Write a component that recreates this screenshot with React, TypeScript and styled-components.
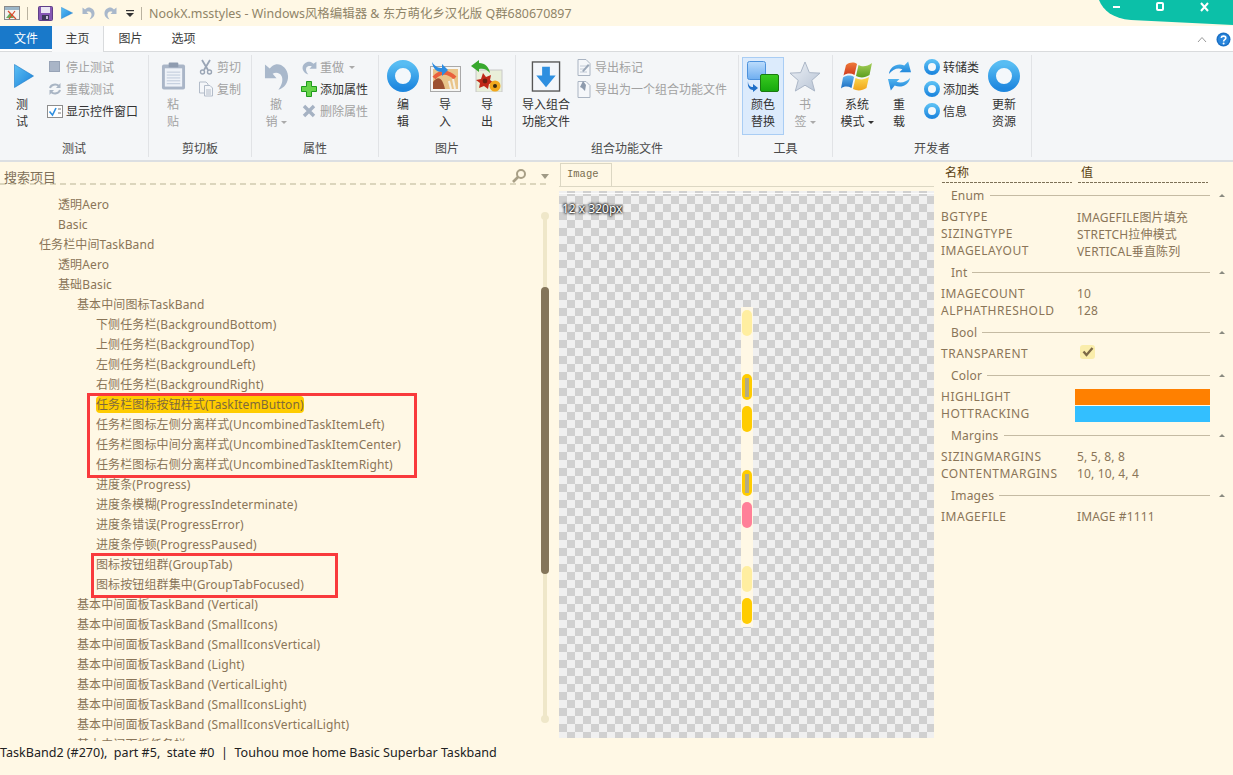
import React from 'react';
import styled, { createGlobalStyle } from 'styled-components';

const Global = createGlobalStyle`
  html, body { margin: 0; padding: 0; background: #fff8e5; overflow: hidden; }
  body { font-family: "Noto Sans", "Noto Sans CJK SC", sans-serif; font-size: 12px; }
`;
const Win = styled.div`
  position: relative; width: 1233px; height: 775px; display: flex; flex-direction: column;
  background: #fff8e5; overflow: hidden;
`;
const TitleBar = styled.div`
  height: 26px; display: flex; align-items: center; flex: none; padding-left: 4px;
`;
const QBtn = styled.span<{ $w: number }>`
  width: ${p => p.$w}px; flex: none; display: flex; align-items: center; height: 26px;
`;
const TitleSep = styled.span<{ $mr: number }>`
  width: 1px; height: 13px; background: #b9b2a0; flex: none; margin: 0 ${p => p.$mr}px 0 7px;
`;
const TitleText = styled.span`
  color: #8f8468; font-size: 12.45px; white-space: nowrap;
`;
const TabBar = styled.div`
  height: 26px; flex: none; background: #fff; display: flex; align-items: flex-start; position: relative;
  border-bottom: 1px solid #d9dbdd; box-sizing: border-box;
`;
const FileTab = styled.div`
  width: 52px; height: 23px; background: #1979ca; color: #fff; display: flex; align-items: center;
  justify-content: center; font-size: 12px;
`;
const Tab = styled.div<{ $active?: boolean }>`
  width: ${p => (p.$active ? 52 : 53)}px; height: ${p => (p.$active ? 26 : 23)}px; display: flex; align-items: center; justify-content: center;
  padding-bottom: ${p => (p.$active ? 3 : 0)}px; box-sizing: border-box; color: #3b3b3b;
  background: ${p => (p.$active ? '#f8f9fa' : '#fff')};
  border-right: ${p => (p.$active ? '1px solid #d9dbdd' : 'none')};
`;
const TabRight = styled.div`
  margin-left: auto; display: flex; align-items: center; gap: 9px; height: 26px; padding-right: 2px;
`;
const Ribbon = styled.div`
  height: 110px; flex: none; display: flex; background: #f4f6f8; border-bottom: 2px solid #dcdfe2; box-sizing: border-box;
`;
const Group = styled.div<{ $w: number }>`
  width: ${p => p.$w}px; flex: none; box-sizing: border-box; height: 102px; margin-top: 3px; padding-top: 2px;
  display: flex; flex-direction: column;
  border-right: 1px solid #e1e3e6;
`;
const GroupBody = styled.div<{ $pl: number }>`
  height: 78px; flex: none; padding-left: ${p => p.$pl}px; display: flex; align-items: flex-start;
`;
const GroupLabel = styled.div`
  height: 18px; margin-top: 4px; flex: none; display: flex; align-items: center; justify-content: center; color: #4a4a4a; font-size: 12px;
`;
const Large = styled.div<{ $w: number; $off?: boolean; $hot?: boolean; $ml?: number }>`
  width: ${p => p.$w}px; height: 78px; flex: none; display: flex; flex-direction: column; align-items: center;
  box-sizing: border-box; color: ${p => (p.$off ? '#a2a2a2' : '#333')}; margin-left: ${p => p.$ml ?? 0}px;
  border: 1px solid ${p => (p.$hot ? '#a9cdf4' : 'transparent')};
  background: ${p => (p.$hot ? '#dcebfc' : 'transparent')};
`;
const LargeIcon = styled.div<{ $shift?: number }>`
  height: 36px; display: flex; align-items: center; justify-content: center; flex: none;
  padding-left: ${p => p.$shift ?? 0}px;
`;
const LargeText = styled.div`
  line-height: 17px; text-align: center; white-space: pre; margin-top: 2px;
`;
const Caret = styled.span<{ $dark?: boolean }>`
  display: inline-block; width: 0; height: 0; margin-left: 3px; vertical-align: 2px;
  border-left: 3px solid transparent; border-right: 3px solid transparent;
  border-top: 3px solid ${p => (p.$dark ? '#333' : '#aaa')};
`;
const SmallCol = styled.div<{ $ml?: number }>`
  display: flex; flex-direction: column; margin-left: ${p => p.$ml ?? 0}px; margin-top: -1px;
`;
const Small = styled.div<{ $off?: boolean }>`
  height: 22px; display: flex; align-items: center; gap: 2px; white-space: nowrap;
  color: ${p => (p.$off ? '#a2a2a2' : '#333')};
`;
const SmIcon = styled.span`
  width: 18px; height: 18px; display: flex; align-items: center; justify-content: center; flex: none;
`;
const Main = styled.div`
  flex: 1; display: flex; min-height: 0;
`;
const TreePanel = styled.div`
  width: 559px; flex: none; position: relative; display: flex; flex-direction: column;
`;
const Search = styled.div`
  height: 23px; flex: none; margin-right: 9px; box-sizing: border-box;
  display: flex; align-items: flex-end; padding: 0 1px 0 4px; color: #7f7058; font-size: 13px;
  background: repeating-linear-gradient(90deg, #dcd6bd 0 6px, transparent 6px 10px) bottom / 100% 2px no-repeat;
`;
const SearchLabel = styled.span`
  flex: 1; line-height: 20px; margin-bottom: -2px;
`;
const SearchTail = styled.span<{ $w: number }>`
  width: ${p => p.$w}px; height: 16px; flex: none; display: flex; align-items: center; margin-bottom: 1px;
`;
const TreeList = styled.div`
  flex: 1; overflow: hidden; padding-top: 10px;
`;
const Row = styled.div<{ $lvl: number }>`
  height: 20px; line-height: 20px; padding-left: ${p => 39 + (p.$lvl - 1) * 19}px; color: #8a7558; white-space: nowrap; letter-spacing: 0.12px;
`;
const Hi = styled.span`
  background: #ffcc00; border-radius: 4px; display: inline-block; line-height: 17px; color: #7f6a3a;
`;
const RedBox = styled.div<{ $x: number; $y: number; $w: number; $h: number }>`
  position: absolute; left: ${p => p.$x}px; top: ${p => p.$y}px; width: ${p => p.$w}px; height: ${p => p.$h}px;
  border: 3px solid #f93a3c; box-sizing: border-box; pointer-events: none;
`;
const Track = styled.div`
  position: absolute; left: 543px; top: 53px; width: 4px; height: 505px; background: #efe7c9;
  &::before, &::after { content: ""; position: absolute; left: -2px; width: 8px; height: 8px; border-radius: 50%; background: #efe7c9; }
  &::before { top: -3px; }
  &::after { bottom: -3px; }
`;
const Thumb = styled.div`
  position: absolute; left: 541px; top: 125px; width: 8px; height: 287px; background: #84755a; border-radius: 4px;
`;
const ImagePanel = styled.div`
  width: 375px; flex: none; display: flex; flex-direction: column;
`;
const ImageTabs = styled.div`
  height: 25px; flex: none; display: flex; align-items: flex-start; padding-top: 1px; box-sizing: border-box;
  border-bottom: 1px solid #dcd7c3; margin-bottom: 4px;
`;
const ImageTab = styled.div`
  margin-left: 1px; width: 52px; height: 24px; box-sizing: border-box; border: 1px solid #dcd7c3;
  font-family: "Liberation Mono", monospace; font-size: 10.5px; color: #7a6e50;
  display: flex; align-items: center; padding: 0 0 3px 6px;
`;
const Checker = styled.div`
  height: 547px; position: relative; display: flex; justify-content: center; box-sizing: border-box;
  background: repeating-conic-gradient(#d0d0d0 0 25%, #f0f0f0 0 50%) 0 -3px / 16px 16px;
  &::before { content: ""; position: absolute; left: 0; right: 0; top: 2px; height: 1px; background: #fbfbfb; }
`;
const ImgInfo = styled.div`
  position: absolute; left: 3px; top: 9px; font-size: 12px; color: #fff;
  text-shadow: 0 0 3px #000, 0 0 3px #000, 0 0 2px #000;
`;
const Strip = styled.div`
  width: 12px; height: 320px; margin-top: 116px; background: #fff8e5; display: flex; flex-direction: column; align-items: center;
`;
const Frame = styled.div`
  height: 32px; flex: none; display: flex; align-items: center; justify-content: center; width: 100%;
`;
const Pill = styled.div<{ $c: string }>`
  width: 10px; height: 26px; border-radius: 5px; background: ${p => p.$c}; display: flex; align-items: center; justify-content: center;
`;
const PillCore = styled.div`
  width: 4px; height: 19px; background: #b4ab84;
`;
const Props = styled.div`
  flex: 1; min-width: 0; display: flex; flex-direction: column; padding-left: 8px;
`;
const PropHead = styled.div`
  height: 21px; flex: none; display: flex; gap: 6px; margin-right: 25px; margin-bottom: -1px;
`;
const HeadCell = styled.div<{ $w: number }>`
  width: ${p => p.$w}px; box-sizing: border-box; padding: 2px 0 0 3px; color: #5a3f10; font-size: 12px; line-height: 18px; height: 21px;
  background: repeating-linear-gradient(90deg, #7d7156 0 3px, transparent 3px 4px) bottom / 100% 1px no-repeat;
`;
const Heading = styled.div`
  height: 26px; box-sizing: border-box; padding: 1px 0 0 9px; display: flex; align-items: center; gap: 5px; color: #8a7558; letter-spacing: 0.2px;
`;
const HeadLine = styled.div`
  flex: 1; height: 1px; background: #c5bba3;
`;
const Tri = styled.span`
  width: 23px; flex: none; margin-left: -5px; display: flex; justify-content: center;
  &::before { content: ""; width: 0; height: 0; border-left: 3px solid transparent; border-right: 3px solid transparent; border-bottom: 3px solid #8a8a80; }
`;
const PropRow = styled.div`
  height: 17px; display: flex; align-items: center; color: #8a7558; white-space: nowrap; letter-spacing: 0.15px;
`;
const PropName = styled.div`
  width: 136px; flex: none; margin-left: -1px; letter-spacing: 0.5px;
`;
const Swatch = styled.div<{ $c: string }>`
  width: 135px; height: 16px; background: ${p => p.$c}; margin-left: -2px;
`;
const Check = styled.div`
  width: 15px; height: 14px; border-radius: 3px; background: #faedab; margin-left: 3px; margin-top: -4px;
  display: flex; align-items: center; justify-content: center;
`;
const Status = styled.div`
  height: 34px; flex: none; color: #222; font-size: 12.55px; padding-top: 1px; line-height: 21px; white-space: pre; box-sizing: border-box;
`;
const Controls = styled.svg`
  position: absolute; right: 0; top: 0;
`;

const Ring = ({ s }: { s: number }) => (
  <svg width={s} height={s} viewBox="0 0 32 32">
    <defs><linearGradient id="ring" x1="0" y1="0" x2="0" y2="1"><stop offset="0" stopColor="#58bdf3" /><stop offset="1" stopColor="#1f88df" /></linearGradient></defs>
    <circle cx="16" cy="16" r="12" fill="#f4f8fb" stroke="url(#ring)" strokeWidth="8" />
  </svg>
);
const PlayIcon = ({ w = 20, h = 24 }: { w?: number; h?: number }) => (
  <svg width={w} height={h} viewBox="0 0 20 24" preserveAspectRatio="none"><defs><linearGradient id="pl" x1="0" y1="0" x2="1" y2="1"><stop offset="0" stopColor="#5cc0f5" /><stop offset="1" stopColor="#1a80d8" /></linearGradient></defs><path d="M.5 .5 L19.5 12 L.5 23.5 Z" fill="url(#pl)" stroke="#1878c8" strokeWidth=".6" /></svg>
);
const Undo = ({ w = 25, h = 30, c = '#a9b8cb', flip = false }: { w?: number; h?: number; c?: string; flip?: boolean }) => (
  <svg width={w} height={h} viewBox="0 0 26 26" preserveAspectRatio="none" style={flip ? { transform: 'scaleX(-1)' } : undefined}>
    <path d="M1 3 V15 H13 L9 11 C12 9.5 17 10 18.5 13.5 C20 17 18.5 21 15 25 C21 23.5 25.5 18.5 25 13 C24.5 6.5 18 2 12 3 C10 3.5 8 4.5 6 6.5 Z" fill={c} />
  </svg>
);
const Ic = {
  app: <svg width="16" height="16" viewBox="0 0 16 16"><rect x=".5" y="1.5" width="15" height="13" fill="#f3f3f0" stroke="#8a8a8a" /><rect x="1" y="2" width="14" height="3" fill="#9cb6c8" /><path d="M2 13 L6 8 L10 13" fill="#6ca85c" /><path d="M4 6 L12 14 M11 6 L5 14" stroke="#d9482c" strokeWidth="1.2" /></svg>,
  save: <svg width="15" height="15" viewBox="0 0 15 15"><rect x=".5" y=".5" width="14" height="14" rx="1" fill="#8658b4" stroke="#5f3f88" /><rect x="3" y="1" width="9" height="6" fill="#ebe6f3" /><rect x="4" y="9" width="7" height="5" fill="#3e3a58" /><rect x="8" y="10" width="2" height="3" fill="#c9c2d8" /></svg>,
  stop: <svg width="12" height="12" viewBox="0 0 12 12"><rect x=".5" y=".5" width="10" height="10" fill="#a9b5c7" stroke="#97a3b6" /></svg>,
  refresh: <svg width="14" height="14" viewBox="0 0 14 14" fill="none" stroke="#a9b5c4" strokeWidth="2"><path d="M2 6 C3 2.5 8 1.5 11 4" /><path d="M12 8 C11 11.5 6 12.5 3 10" /><path d="M12.5 1 V6 H8" fill="#a9b5c4" stroke="none" /><path d="M1.5 13 V8 H6" fill="#a9b5c4" stroke="none" /></svg>,
  check: <svg width="16" height="13" viewBox="0 0 16 13"><rect x=".5" y=".5" width="15" height="12" fill="#fff" stroke="#8d8d8d" /><path d="M2.5 6.5 L5.5 10 L9 3" fill="none" stroke="#2f8fe0" strokeWidth="1.6" /><path d="M11 4 H14 M11 8 H14" stroke="#777" /></svg>,
  paste: <svg width="25" height="30" viewBox="0 0 26 30"><rect x="1" y="3" width="24" height="26" rx="2" fill="#a9b5c7" /><rect x="4" y="7" width="18" height="19" fill="#eef2f8" /><path d="M6 11 H20 M6 14 H20 M6 17 H20 M6 20 H20 M6 23 H20" stroke="#bcc8d8" /><rect x="8" y="1" width="10" height="5" rx="1" fill="#8f9cb0" /></svg>,
  cut: <svg width="14" height="16" viewBox="0 0 14 16" fill="none" stroke="#9aa5b5" strokeWidth="1.4"><path d="M3 1 L9 11 M11 1 L5 11" strokeWidth="1.8" /><circle cx="3.5" cy="13" r="2" /><circle cx="10.5" cy="13" r="2" /></svg>,
  copy: <svg width="16" height="16" viewBox="0 0 16 16" fill="#f4f6f9" stroke="#b3bcc9"><path d="M1.5 1 H8 L10 3 V12 H1.5 Z" /><path d="M6.5 4.5 H12 L14.5 7 V15 H6.5 Z" /><path d="M8 9 H13 M8 11 H13 M8 13 H13" /></svg>,
  plus: <svg width="16" height="16" viewBox="0 0 16 16"><path d="M5.5 .5 H10.5 V5.5 H15.5 V10.5 H10.5 V15.5 H5.5 V10.5 H.5 V5.5 H5.5 Z" fill="#66d34a" stroke="#1f9a1c" /></svg>,
  x: <svg width="14" height="14" viewBox="0 0 14 14"><path d="M2 2 L12 12 M12 2 L2 12" stroke="#a5b2c3" strokeWidth="3.4" /></svg>,
  importImg: <svg width="31" height="31" viewBox="0 0 31 31"><rect x=".5" y="5.5" width="30" height="25" fill="#f6f6f4" stroke="#a9a9a9" /><rect x="3" y="8" width="25" height="20" fill="#e9c489" /><path d="M3 21 C9 13 13 19 15 28 H3 Z" fill="#9c5030" /><path d="M4 17 C10 10 18 10 25 17" fill="none" stroke="#e9603c" strokeWidth="4" /><path d="M19 20 L21 28 M23 18 L25 28" stroke="#f4f0e4" strokeWidth="2" /><path d="M2 1 C5 6 9 7 12 7 V3 L18 9 L12 15 V11 C7 11 3 8 2 1 Z" fill="#2d8ce0" /></svg>,
  exportImg: <svg width="32" height="32" viewBox="0 0 32 32"><rect x="5" y="10" width="26" height="22" fill="#e9efd9" stroke="#c8c8c8" /><path d="M12 13 L15 17 L20 15 L19 20 L23 23 L18 24 L17 29 L13 26 L8 28 L9 23 L5 20 L10 19 Z" fill="#c02818" /><circle cx="24" cy="26" r="5.5" fill="#f2a81d" /><circle cx="24" cy="26" r="2" fill="#3a2a10" /><circle cx="14" cy="21" r="2.4" fill="#6c2010" /><path d="M0 6 L8 0 V3 C14 3 18 7 19 13 C16 9 12 8 8 9 V12 Z" fill="#38a82e" /></svg>,
  importFile: <svg width="30" height="31" viewBox="0 0 30 32"><rect x="1" y="1" width="28" height="30" fill="#f3f6fa" stroke="#555" strokeWidth="1.4" /><path d="M11 6 H19 V15 H25 L15 27 L5 15 H11 Z" fill="#2e8fe0" /></svg>,
  expMark: <svg width="14" height="17" viewBox="0 0 14 17"><path d="M1 .5 H9 L13 4.5 V16.5 H1 Z" fill="#f5f7fa" stroke="#aab4c2" /><path d="M3 7 H10 M3 10 H8 M3 13 H10" stroke="#c2cad5" /><path d="M5 12 L11 5 L12.5 6.5 L6.5 13 Z" fill="#9aa7b8" /></svg>,
  expGroup: <svg width="14" height="18" viewBox="0 0 14 18"><path d="M1 1.5 H9 L13 5.5 V17.5 H1 Z" fill="#f5f7fa" stroke="#aab4c2" /><path d="M3 7 L6 1 L9 5 L8 11 L5 8 Z" fill="#8d9aac" /></svg>,
  colorSwap: (
    <svg width="32" height="31" viewBox="0 0 32 31">
      <defs>
        <linearGradient id="sb" x1="0" y1="0" x2="0" y2="1"><stop offset="0" stopColor="#bcdcfc" /><stop offset="1" stopColor="#6eaef0" /></linearGradient>
        <linearGradient id="sg" x1="0" y1="0" x2="0" y2="1"><stop offset="0" stopColor="#3acb20" /><stop offset="1" stopColor="#16a80e" /></linearGradient>
      </defs>
      <rect x=".5" y=".5" width="18" height="18" rx="2" fill="url(#sb)" stroke="#4d92dc" />
      <rect x="13.5" y="13.5" width="18" height="17" rx="1.5" fill="url(#sg)" stroke="#1a7a10" />
      <path d="M1 20 C1 24 3 26 6 26 V23 L11 27 L6 31 V29 C3 29 0 26 1 20 Z" fill="#1f6fc8" />
    </svg>
  ),
  star: (
    <svg width="32" height="31" viewBox="0 0 32 32">
      <defs><linearGradient id="st" x1="0" y1="0" x2="1" y2="1"><stop offset="0" stopColor="#eef2f7" /><stop offset="1" stopColor="#b7c3d4" /></linearGradient></defs>
      <path d="M16 1 L20.5 12 L31.5 12.5 L23 20 L26 31 L16 25 L6 31 L9 20 L.5 12.5 L11.5 12 Z" fill="url(#st)" stroke="#a9b5c5" />
    </svg>
  ),
  windows: (
    <svg width="32" height="30" viewBox="0 0 32 30">
      <defs>
        <linearGradient id="wr" x1="0" y1="0" x2="0" y2="1"><stop offset="0" stopColor="#ee7a3a" /><stop offset="1" stopColor="#d0381c" /></linearGradient>
        <linearGradient id="wg" x1="0" y1="0" x2="0" y2="1"><stop offset="0" stopColor="#a6cf5a" /><stop offset="1" stopColor="#5c9e1e" /></linearGradient>
        <linearGradient id="wb" x1="0" y1="0" x2="0" y2="1"><stop offset="0" stopColor="#62b4ee" /><stop offset="1" stopColor="#1a6cc0" /></linearGradient>
        <linearGradient id="wy" x1="0" y1="0" x2="0" y2="1"><stop offset="0" stopColor="#fdd84e" /><stop offset="1" stopColor="#f0a41c" /></linearGradient>
      </defs>
      <path d="M5 4 C9 1 13 1 16 3 L13.5 14 C10 12 6 12 2.5 14.5 Z" fill="url(#wr)" />
      <path d="M17.5 4 C21 6 26 6 31 2 L28.5 14 C24 17 19 17 15 15 Z" fill="url(#wg)" />
      <path d="M2 16.5 C6 14 10 14 13 16 L10.5 27 C7 25 3 25 0 27.5 Z" fill="url(#wb)" />
      <path d="M14.5 17 C18.5 19 23 19 28 16 L25.5 27 C21 30 16 30 12 28 Z" fill="url(#wy)" />
    </svg>
  ),
  reload: (
    <svg width="25" height="32" viewBox="0 0 26 32">
      <defs><linearGradient id="rl" x1="0" y1="0" x2="0" y2="1"><stop offset="0" stopColor="#56b8f0" /><stop offset="1" stopColor="#1a80d8" /></linearGradient></defs>
      <path fill="url(#rl)" d="M2 14 C3 6 11 2 18 5 L22 1 L25 12 L13 12 L16 9 C11 7 6 9 2 14 Z" />
      <path fill="url(#rl)" d="M24 18 C23 25 15 29 8 26 L4 31 L1 19 L13 19 L10 22 C15 24 20 22 24 18 Z" />
    </svg>
  ),
  searchI: <svg width="16" height="16" viewBox="0 0 16 16" fill="none" stroke="#a89f86" strokeWidth="2"><circle cx="10" cy="6" r="4" /><path d="M7 9 L2 14" strokeWidth="2.6" /></svg>,
  help: <svg width="15" height="15" viewBox="0 0 15 15"><circle cx="7.5" cy="7.5" r="7" fill="#1a6fc4" /><circle cx="7.5" cy="7.5" r="5.5" fill="#2a86dc" /><path d="M5.2 5.8 C5.5 3.5 9.8 3.5 9.8 6 C9.8 7.8 7.6 7.6 7.6 9.5" fill="none" stroke="#fff" strokeWidth="1.6" /><circle cx="7.6" cy="11.5" r="1" fill="#fff" /></svg>,
  up: <svg width="10" height="7" viewBox="0 0 10 7" fill="none" stroke="#9a9a9a"><path d="M1 6 L5 1.5 L9 6" /></svg>,
  qDown: <svg width="8" height="8" viewBox="0 0 8 8"><rect y="1" width="8" height="1.2" fill="#333" /><path d="M0 4 H8 L4 8 Z" fill="#333" /></svg>,
  tick: <svg width="12" height="11" viewBox="0 0 12 11"><path d="M1.5 5.5 L4.5 9 L10.5 2" fill="none" stroke="#7d6a48" strokeWidth="2.4" /></svg>,
  srchDown: <svg width="8" height="5" viewBox="0 0 8 5"><path d="M0 0 H8 L4 5 Z" fill="#a09a86" /></svg>,
};

const rows: [number, string][] = [
  [2, '透明Aero'], [2, 'Basic'], [1, '任务栏中间TaskBand'], [2, '透明Aero'], [2, '基础Basic'],
  [3, '基本中间图标TaskBand'], [4, '下侧任务栏(BackgroundBottom)'], [4, '上侧任务栏(BackgroundTop)'],
  [4, '左侧任务栏(BackgroundLeft)'], [4, '右侧任务栏(BackgroundRight)'], [4, '任务栏图标按钮样式(TaskItemButton)'],
  [4, '任务栏图标左侧分离样式(UncombinedTaskItemLeft)'], [4, '任务栏图标中间分离样式(UncombinedTaskItemCenter)'],
  [4, '任务栏图标右侧分离样式(UncombinedTaskItemRight)'], [4, '进度条(Progress)'], [4, '进度条模糊(ProgressIndeterminate)'],
  [4, '进度条错误(ProgressError)'], [4, '进度条停顿(ProgressPaused)'], [4, '图标按钮组群(GroupTab)'],
  [4, '图标按钮组群集中(GroupTabFocused)'], [3, '基本中间面板TaskBand (Vertical)'], [3, '基本中间面板TaskBand (SmallIcons)'],
  [3, '基本中间面板TaskBand (SmallIconsVertical)'], [3, '基本中间面板TaskBand (Light)'], [3, '基本中间面板TaskBand (VerticalLight)'],
  [3, '基本中间面板TaskBand (SmallIconsLight)'], [3, '基本中间面板TaskBand (SmallIconsVerticalLight)'], [3, '基本中间面板任务栏'],
];
const frames: (string | null | 'core')[] = ['#ffeea0', null, 'core', '#ffcc00', null, 'core', '#ff8098', null, '#ffeea0', '#ffcc00'];

const sections: { t: string; rows: [string, React.ReactNode][] }[] = [
  { t: 'Enum', rows: [['BGTYPE', 'IMAGEFILE图片填充'], ['SIZINGTYPE', 'STRETCH拉伸模式'], ['IMAGELAYOUT', 'VERTICAL垂直陈列']] },
  { t: 'Int', rows: [['IMAGECOUNT', '10'], ['ALPHATHRESHOLD', '128']] },
  { t: 'Bool', rows: [['TRANSPARENT', <Check>{Ic.tick}</Check>]] },
  { t: 'Color', rows: [['HIGHLIGHT', <Swatch $c="#ff8000" />], ['HOTTRACKING', <Swatch $c="#33bfff" />]] },
  { t: 'Margins', rows: [['SIZINGMARGINS', '5, 5, 8, 8'], ['CONTENTMARGINS', '10, 10, 4, 4']] },
  { t: 'Images', rows: [['IMAGEFILE', 'IMAGE #1111']] },
];

export default function App() {
  return (
    <Win>
      <Global />
      <TitleBar>
        <QBtn $w={16}>{Ic.app}</QBtn>
        <TitleSep $mr={10} />
        <QBtn $w={23}>{Ic.save}</QBtn>
        <QBtn $w={21}><PlayIcon w={12} h={12} /></QBtn>
        <QBtn $w={22}><Undo w={13} h={14} /></QBtn>
        <QBtn $w={22}><Undo w={13} h={14} flip /></QBtn>
        <QBtn $w={8}>{Ic.qDown}</QBtn>
        <TitleSep $mr={7} />
        <TitleText>NookX.msstyles - Windows风格编辑器 &amp; 东方萌化乡汉化版 Q群680670897</TitleText>
      </TitleBar>
      <TabBar>
        <FileTab>文件</FileTab>
        <Tab $active>主页</Tab>
        <Tab>图片</Tab>
        <Tab>选项</Tab>
        <TabRight>{Ic.up}{Ic.help}</TabRight>
      </TabBar>
      <Ribbon>
        <Group $w={149}>
          <GroupBody $pl={4}>
            <Large $w={36}><LargeIcon $shift={3}><PlayIcon /></LargeIcon><LargeText>{'测\n试'}</LargeText></Large>
            <SmallCol $ml={6}>
              <Small $off><SmIcon>{Ic.stop}</SmIcon>停止测试</Small>
              <Small $off><SmIcon>{Ic.refresh}</SmIcon>重载测试</Small>
              <Small><SmIcon>{Ic.check}</SmIcon>显示控件窗口</Small>
            </SmallCol>
          </GroupBody>
          <GroupLabel>测试</GroupLabel>
        </Group>
        <Group $w={103}>
          <GroupBody $pl={6}>
            <Large $w={36} $off><LargeIcon>{Ic.paste}</LargeIcon><LargeText>{'粘\n贴'}</LargeText></Large>
            <SmallCol $ml={6}>
              <Small $off><SmIcon>{Ic.cut}</SmIcon>剪切</Small>
              <Small $off><SmIcon>{Ic.copy}</SmIcon>复制</Small>
            </SmallCol>
          </GroupBody>
          <GroupLabel>剪切板</GroupLabel>
        </Group>
        <Group $w={127}>
          <GroupBody $pl={6}>
            <Large $w={36} $off><LargeIcon><Undo /></LargeIcon><LargeText>{'撤\n销'}<Caret /></LargeText></Large>
            <SmallCol $ml={6}>
              <Small $off><SmIcon><Undo w={15} h={15} flip /></SmIcon>重做<Caret /></Small>
              <Small><SmIcon>{Ic.plus}</SmIcon>添加属性</Small>
              <Small $off><SmIcon>{Ic.x}</SmIcon>删除属性</Small>
            </SmallCol>
          </GroupBody>
          <GroupLabel>属性</GroupLabel>
        </Group>
        <Group $w={137}>
          <GroupBody $pl={3}>
            <Large $w={42}><LargeIcon><Ring s={32} /></LargeIcon><LargeText>{'编\n辑'}</LargeText></Large>
            <Large $w={42}><LargeIcon>{Ic.importImg}</LargeIcon><LargeText>{'导\n入'}</LargeText></Large>
            <Large $w={42}><LargeIcon>{Ic.exportImg}</LargeIcon><LargeText>{'导\n出'}</LargeText></Large>
          </GroupBody>
          <GroupLabel>图片</GroupLabel>
        </Group>
        <Group $w={223}>
          <GroupBody $pl={3}>
            <Large $w={54}><LargeIcon>{Ic.importFile}</LargeIcon><LargeText>{'导入组合\n功能文件'}</LargeText></Large>
            <SmallCol $ml={2}>
              <Small $off><SmIcon>{Ic.expMark}</SmIcon>导出标记</Small>
              <Small $off><SmIcon>{Ic.expGroup}</SmIcon>导出为一个组合功能文件</Small>
            </SmallCol>
          </GroupBody>
          <GroupLabel>组合功能文件</GroupLabel>
        </Group>
        <Group $w={94}>
          <GroupBody $pl={3}>
            <Large $w={42} $hot><LargeIcon>{Ic.colorSwap}</LargeIcon><LargeText>{'颜色\n替换'}</LargeText></Large>
            <Large $w={42} $off><LargeIcon>{Ic.star}</LargeIcon><LargeText>{'书\n签'}<Caret /></LargeText></Large>
          </GroupBody>
          <GroupLabel>工具</GroupLabel>
        </Group>
        <Group $w={199}>
          <GroupBody $pl={3}>
            <Large $w={42}><LargeIcon>{Ic.windows}</LargeIcon><LargeText>{'系统\n模式'}<Caret $dark /></LargeText></Large>
            <Large $w={42}><LargeIcon>{Ic.reload}</LargeIcon><LargeText>{'重\n载'}</LargeText></Large>
            <SmallCol $ml={3}>
              <Small><SmIcon><Ring s={16} /></SmIcon>转储类</Small>
              <Small><SmIcon><Ring s={16} /></SmIcon>添加类</Small>
              <Small><SmIcon><Ring s={16} /></SmIcon>信息</Small>
            </SmallCol>
            <Large $w={42} $ml={4}><LargeIcon><Ring s={32} /></LargeIcon><LargeText>{'更新\n资源'}</LargeText></Large>
          </GroupBody>
          <GroupLabel>开发者</GroupLabel>
        </Group>
      </Ribbon>
      <Main>
        <TreePanel>
          <Search>
            <SearchLabel>搜索项目</SearchLabel>
            <SearchTail $w={30}>{Ic.searchI}</SearchTail>
            <SearchTail $w={8}>{Ic.srchDown}</SearchTail>
          </Search>
          <TreeList>
            {rows.map(([l, t], i) => (
              <Row key={i} $lvl={l}>{i === 10 ? <Hi>{t}</Hi> : t}</Row>
            ))}
          </TreeList>
          <Track />
          <Thumb />
          <RedBox $x={87} $y={231} $w={330} $h={85} />
          <RedBox $x={91} $y={391} $w={247} $h={45} />
        </TreePanel>
        <ImagePanel>
          <ImageTabs><ImageTab>Image</ImageTab></ImageTabs>
          <Checker>
            <ImgInfo>12 x 320px</ImgInfo>
            <Strip>
              {frames.map((f, i) => (
                <Frame key={i}>
                  {f === 'core' ? <Pill $c="#ffcc00"><PillCore /></Pill> : f ? <Pill $c={f} /> : null}
                </Frame>
              ))}
            </Strip>
          </Checker>
        </ImagePanel>
        <Props>
          <PropHead>
            <HeadCell $w={130}>名称</HeadCell>
            <HeadCell $w={130}>值</HeadCell>
          </PropHead>
          {sections.map(s => (
            <div key={s.t}>
              <Heading>{s.t}<HeadLine /><Tri /></Heading>
              {s.rows.map(([k, v]) => (
                <PropRow key={k}><PropName>{k}</PropName>{v}</PropRow>
              ))}
            </div>
          ))}
        </Props>
      </Main>
      <Status>{'TaskBand2 (#270),  part #5,  state #0  |  Touhou moe home Basic Superbar Taskband'}</Status>
      <Controls width="134" height="26" viewBox="0 0 134 26">
        <path d="M0 0 H134 V25 L32 20 C14 19 4 10 0 0 Z" fill="#0cc0a8" />
        <rect x="14" y="6" width="7" height="2" fill="#fff" />
        <rect x="58" y="3" width="6" height="7" rx="1" fill="none" stroke="#fff" strokeWidth="2" />
        <path d="M102 3 L109 11 M109 3 L102 11" stroke="#fff" strokeWidth="2" />
      </Controls>
    </Win>
  );
}
